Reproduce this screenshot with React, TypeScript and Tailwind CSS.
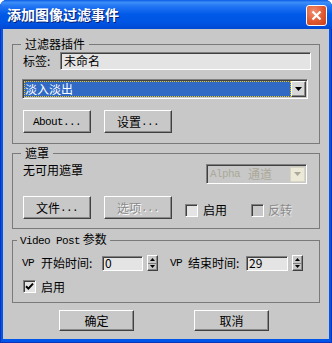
import React from "react";

const MONO = "font-['Liberation_Mono',monospace] text-[11px] tracking-[-0.6px]";
const RAISED =
  "border border-t-white border-l-white border-r-[#404040] border-b-[#404040] shadow-[inset_-1px_-1px_0_#8a8a8a]";
const SUNKEN =
  "border border-t-[#808080] border-l-[#808080] border-r-white border-b-white shadow-[inset_1px_1px_0_#404040]";

function Btn({
  children,
  className = "",
  disabled = false,
}: {
  children: React.ReactNode;
  className?: string;
  disabled?: boolean;
}) {
  return (
    <div
      className={`flex items-center justify-center bg-[#c8c8c8] ${RAISED} ${className} ${
        disabled ? "text-[#8a8a8a] [text-shadow:1px_1px_0_#ffffff]" : ""
      }`}
    >
      {children}
    </div>
  );
}

function Check({ checked = false, disabled = false }: { checked?: boolean; disabled?: boolean }) {
  return (
    <div
      className={`flex h-[13px] w-[13px] items-center justify-center ${SUNKEN} ${
        disabled ? "bg-[#c8c8c8]" : "bg-[#e4e4e4]"
      }`}
    >
      {checked && (
        <svg width="9" height="9" viewBox="0 0 9 9">
          <path d="M1 4.2 L3.4 6.6 L8 1.6" stroke="#000" strokeWidth="2" fill="none" />
        </svg>
      )}
    </div>
  );
}

function Spinner() {
  return (
    <div className={`ml-[4px] flex h-[16px] w-[11px] flex-col bg-[#c8c8c8] ${RAISED}`}>
      <div className="flex flex-1 items-center justify-center border-b border-[#808080]">
        <svg width="5" height="3" viewBox="0 0 5 3">
          <path d="M2.5 0 L5 3 L0 3 Z" fill="#000" />
        </svg>
      </div>
      <div className="flex flex-1 items-center justify-center">
        <svg width="5" height="3" viewBox="0 0 5 3">
          <path d="M0 0 L5 0 L2.5 3 Z" fill="#000" />
        </svg>
      </div>
    </div>
  );
}

function Arrow({ color }: { color: string }) {
  return (
    <svg width="7" height="4" viewBox="0 0 7 4">
      <path d="M0 0 L7 0 L3.5 4 Z" fill={color} />
    </svg>
  );
}

function Group({
  title,
  legendClass,
  children,
}: {
  title: React.ReactNode;
  legendClass: string;
  children: React.ReactNode;
}) {
  return (
    <fieldset className="mx-[9px] border border-[#7a7a7a]">
      <legend className={`leading-[16px] ${legendClass}`}>{title}</legend>
      {children}
    </fieldset>
  );
}

export default function App() {
  return (
    <div className="h-[343px] w-[332px] bg-white font-['Noto_Sans_CJK_SC',sans-serif] text-[12px] leading-[16px] text-black">
      <div className="flex h-full flex-col rounded-t-[7px] bg-[#0056ea] shadow-[inset_1px_0_0_#0b34b8,inset_-1px_0_0_#0b34b8,inset_0_-1px_0_#0b34b8]">
        {/* title bar */}
        <div className="flex h-[29px] items-start justify-between rounded-t-[7px] bg-[linear-gradient(to_bottom,#0a5de4_0%,#3d8ef8_8%,#2174f2_22%,#0059e8_50%,#0054e3_80%,#0048d2_100%)] pl-[7px] pr-[5px]">
          <span className="mt-[6px] text-[14px] font-bold leading-[17px] text-white [text-shadow:1px_1px_0_#0a1e6e]">
            添加图像过滤事件
          </span>
          <div className="mt-[5px] flex h-[21px] w-[21px] items-center justify-center rounded-[3px] border border-white bg-[radial-gradient(circle_at_35%_30%,#f09072_0%,#e0582f_55%,#c4401a_100%)]">
            <svg width="11" height="11" viewBox="0 0 11 11">
              <path d="M1.5 1.5 L9.5 9.5 M9.5 1.5 L1.5 9.5" stroke="#fff" strokeWidth="2.2" />
            </svg>
          </div>
        </div>

        {/* body */}
        <div className="mx-[3px] mb-[4px] h-[310px] bg-[#c8c8c8] pt-[7px]">
          <Group title="过滤器插件" legendClass="ml-[8px] px-[4px]">
            <div className="pb-[10px] pl-[9px] pr-[7px]">
              <div className="flex h-[18px] items-center">
                <span className="ml-[1px] w-[37px]">标签:</span>
                <div className={`flex h-[18px] w-[251px] items-center bg-[#e4e4e4] pl-[3px] ${SUNKEN}`}>
                  未命名
                </div>
              </div>
              <div className={`mt-[9px] flex h-[20px] w-[286px] items-stretch bg-[#c8c8c8] p-[1px] ${SUNKEN}`}>
                <div className="flex flex-1 items-center border border-dotted border-[#f5c000] bg-[#316ac5] text-white">
                  淡入淡出
                </div>
                <div className={`flex w-[15px] items-center justify-center bg-[#d8d8d8] ${RAISED}`}>
                  <Arrow color="#000" />
                </div>
              </div>
              <div className="mt-[11px] flex gap-[13px] pl-[1px]">
                <Btn className="h-[23px] w-[68px]">
                  <span className={MONO}>About...</span>
                </Btn>
                <Btn className="h-[23px] w-[68px]">
                  设置<span className={MONO}>...</span>
                </Btn>
              </div>
            </div>
          </Group>

          <div className="h-[1px]" />

          <Group title="遮罩" legendClass="ml-[8px] px-[4px]">
            <div className="pb-[9px] pl-[9px]">
              <div className="flex h-[23px] items-start">
                <span className="ml-[1px] mt-[1px] w-[183px]">无可用遮罩</span>
                <div className={`mt-[3px] flex h-[20px] w-[101px] items-center bg-[#c8c8c8] p-[1px] ${SUNKEN}`}>
                  <span className="flex flex-1 items-center pl-[2px] text-[#aca899]">
                    <span className={MONO}>Alpha</span>
                    <span className="ml-[8px]">通道</span>
                  </span>
                  <div className="flex h-[15px] w-[15px] items-center justify-center border border-[#d8d4c4] bg-[#ece9d8]">
                    <Arrow color="#aca899" />
                  </div>
                </div>
              </div>
              <div className="mt-[12px] flex h-[23px] items-start">
                <Btn className="ml-[1px] h-[23px] w-[68px]">
                  文件<span className={MONO}>...</span>
                </Btn>
                <Btn className="ml-[13px] h-[23px] w-[68px]" disabled>
                  选项<span className={MONO}>...</span>
                </Btn>
                <div className="ml-[13px] mt-[6px] flex h-[16px] items-center gap-[5px]">
                  <Check />
                  <span>启用</span>
                </div>
                <div className="ml-[24px] mt-[6px] flex h-[16px] items-center gap-[4px]">
                  <Check disabled />
                  <span className="text-[#8a8a8a] [text-shadow:1px_1px_0_#e8e8e8]">反转</span>
                </div>
              </div>
            </div>
          </Group>

          <div className="h-[2px]" />

          <Group
            title={
              <>
                <span className={MONO}>Video Post</span> 参数
              </>
            }
            legendClass="ml-[4px] px-[3px]"
          >
            <div className="pb-[9px] pl-[9px]">
              <div className="mt-[6px] flex h-[16px] items-center">
                <span className="flex w-[80px] items-center">
                  <span className={MONO}>VP</span>
                  <span className="ml-[7px]">开始时间:</span>
                </span>
                <div className={`flex h-[15px] w-[41px] items-center bg-[#e4e4e4] pl-[2px] ${SUNKEN}`}>0</div>
                <Spinner />
                <span className="ml-[12px] flex w-[76px] items-center">
                  <span className={MONO}>VP</span>
                  <span className="ml-[6px]">结束时间:</span>
                </span>
                <div className={`flex h-[15px] w-[42px] items-center bg-[#e4e4e4] pl-[2px] ${SUNKEN}`}>29</div>
                <Spinner />
              </div>
              <div className="mt-[9px] flex h-[13px] items-center gap-[5px] pl-[1px]">
                <Check checked />
                <span>启用</span>
              </div>
            </div>
          </Group>

          <div className="mt-[7px] flex gap-[60px] pl-[56px]">
            <Btn className="h-[21px] w-[75px]">确定</Btn>
            <Btn className="h-[21px] w-[75px]">取消</Btn>
          </div>
        </div>
      </div>
    </div>
  );
}
